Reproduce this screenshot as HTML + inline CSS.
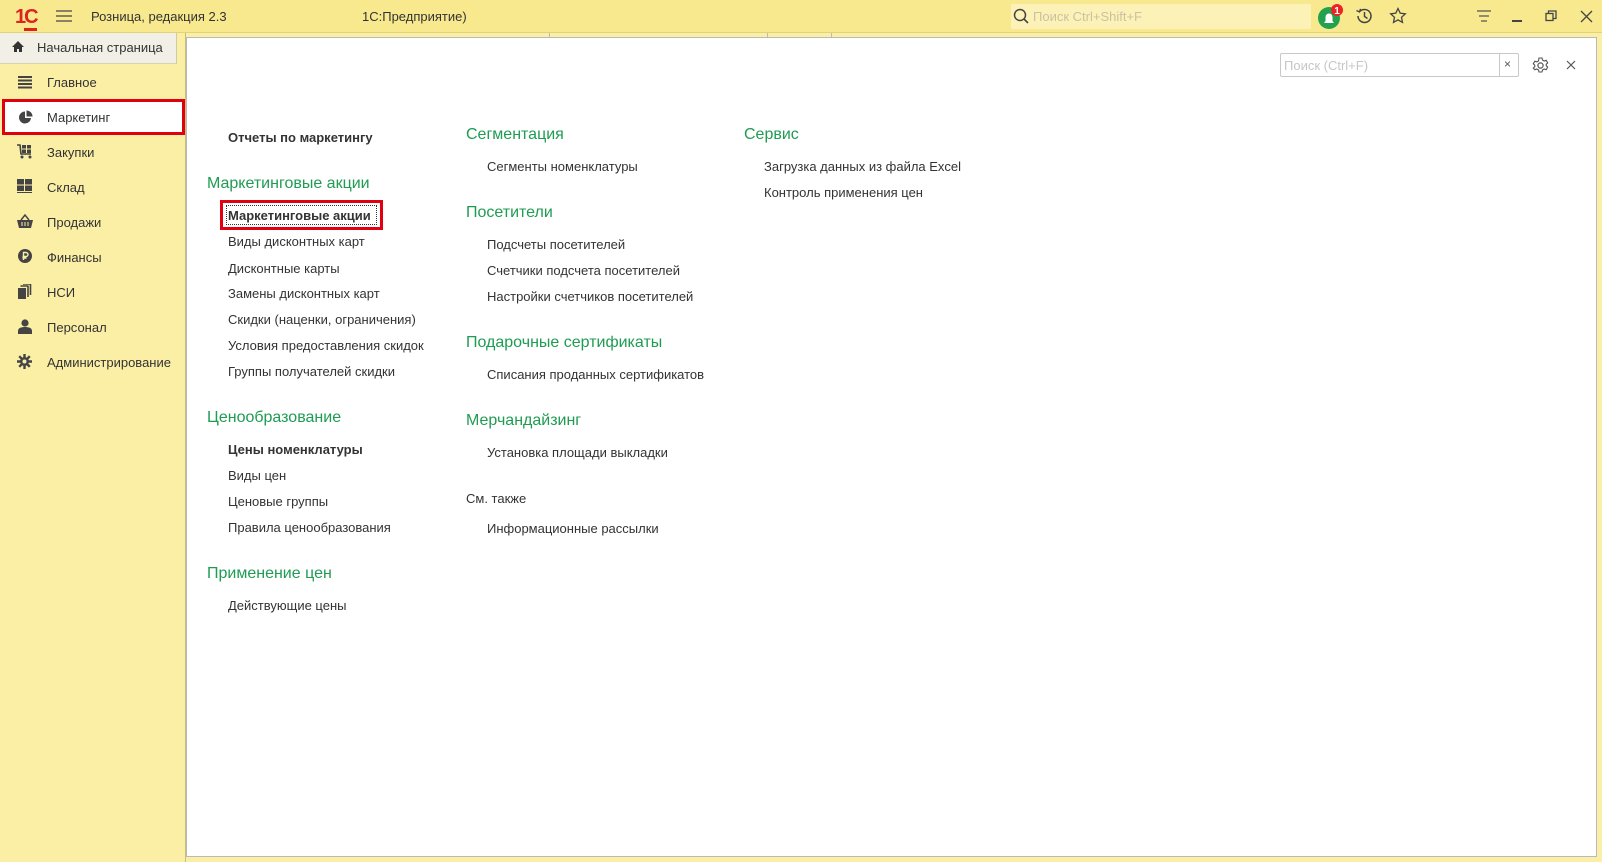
<!DOCTYPE html>
<html><head><meta charset="utf-8"><style>
*{margin:0;padding:0;box-sizing:border-box}
body{width:1602px;height:862px;background:#fbeea6;font-family:"Liberation Sans",Arial,sans-serif;font-size:13px;color:#333;position:relative;overflow:hidden}
.a{position:absolute;white-space:nowrap}
.tb{position:absolute;left:0;top:0;width:1602px;height:33px;background:#f8e98f;border-bottom:1px solid #e3d27a}
.side{position:absolute;left:0;top:33px;width:186px;height:829px;background:#fbefa6;border-right:1px solid #c9bd7a}
.home{position:absolute;left:0;top:33px;width:177px;height:31px;background:#f2f0e6;border-right:1px solid #cfc9a8;border-bottom:1px solid #d8d2b0}
.panel{position:absolute;left:186px;top:37px;width:1411px;height:820px;background:#fff;border:1px solid #b9b9b9}
.nav{font-size:13px;color:#333}
.h{font-size:16px;color:#1e9c52}
.l{font-size:13px;color:#333}
.b{font-weight:bold}
</style></head><body>
<div class="tb"></div>
<div class="a" style="left:15px;top:6px;font:bold 20px 'Liberation Sans';color:#d22;letter-spacing:-2px">1<span style="border-bottom:3px solid #d22">С</span></div>
<svg class="a" style="left:56px;top:9px" width="16" height="14"><path d="M0 2H16M0 7H16M0 12H16" stroke="#444" stroke-width="1.3"/></svg>
<div class="a" style="left:91px;top:9px;font-size:13px;color:#333">Розница, редакция 2.3</div>
<div class="a" style="left:362px;top:9px;font-size:13px;color:#333">1С:Предприятие)</div>
<div class="a" style="left:1011px;top:4px;width:300px;height:25px;background:#fcf2b8"></div>
<svg class="a" style="left:1013px;top:8px" width="16" height="16"><circle cx="7" cy="7" r="5.5" fill="none" stroke="#444" stroke-width="1.5"/><path d="M11 11L15 15" stroke="#444" stroke-width="1.6"/></svg>
<div class="a" style="left:1033px;top:9px;color:#c8c2a0;font-size:13px">Поиск Ctrl+Shift+F</div>
<svg class="a" style="left:1317px;top:4px" width="28" height="26"><circle cx="12" cy="14" r="11" fill="#22a24e"/><path d="M7 19h10l-1.5-2v-4a3.5 3.5 0 0 0-7 0v4z" fill="#fff"/><circle cx="20" cy="6" r="6" fill="#e22"/><text x="20" y="10" font-size="10" font-weight="bold" fill="#fff" text-anchor="middle" font-family="Liberation Sans">1</text></svg>
<svg class="a" style="left:1355px;top:7px" width="18" height="18"><path d="M3 9a6.5 6.5 0 1 0 2-4.7" fill="none" stroke="#444" stroke-width="1.5"/><path d="M1.5 3.5L4.5 5 5.5 1.8" fill="none" stroke="#444" stroke-width="1.3"/><path d="M9.5 5v4.5l3 2" fill="none" stroke="#444" stroke-width="1.5"/></svg>
<svg class="a" style="left:1389px;top:7px" width="18" height="18"><path d="M9 1.5l2.2 4.7 5.1.6-3.8 3.5 1 5.1L9 12.9l-4.5 2.5 1-5.1L1.7 6.8l5.1-.6z" fill="none" stroke="#444" stroke-width="1.3"/></svg>
<svg class="a" style="left:1476px;top:9px" width="16" height="16"><path d="M1 2h14M3 7h10M5 12h6" stroke="#555" stroke-width="1.3"/></svg>
<div class="a" style="left:1512px;top:20px;width:10px;height:1.5px;background:#444"></div>
<svg class="a" style="left:1545px;top:10px" width="12" height="12"><rect x="1" y="3.5" width="7" height="7" fill="none" stroke="#444" stroke-width="1.3"/><path d="M3.5 3.5V1H11v7.5H8" fill="none" stroke="#444" stroke-width="1.3"/></svg>
<svg class="a" style="left:1580px;top:10px" width="13" height="13"><path d="M1 1L12 12M12 1L1 12" stroke="#444" stroke-width="1.3"/></svg>
<div class="side"></div>
<div class="home"></div>
<svg class="a" style="left:11px;top:40px" width="14" height="13"><path d="M7 1L1 7h2v5h3V9h2v3h3V7h2z" fill="#333"/></svg>
<div class="a nav" style="left:37px;top:40px">Начальная страница</div>
<div class="panel"></div>
<div class="a" style="left:549px;top:33px;width:1px;height:4px;background:#bbb"></div>
<div class="a" style="left:767px;top:33px;width:1px;height:4px;background:#bbb"></div>
<div class="a" style="left:831px;top:33px;width:1px;height:4px;background:#bbb"></div>
<!-- nav -->
<svg class="a" style="left:18px;top:75px" width="14" height="14"><path d="M0 2h14M0 5.5h14M0 9h14M0 12.5h14" stroke="#444" stroke-width="2"/></svg>
<div class="a nav" style="left:47px;top:75px">Главное</div>
<div class="a" style="left:2px;top:99px;width:183px;height:36px;border:3px solid #e0000f;background:#fff"></div>
<svg class="a" style="left:18px;top:110px" width="15" height="15"><path d="M7 1.5a6 6 0 1 0 6 6.5H7z" fill="#444"/><path d="M8.5 0.5v6h6a6 6 0 0 0-6-6z" fill="#444"/></svg>
<div class="a nav" style="left:47px;top:110px">Маркетинг</div>
<svg class="a" style="left:17px;top:144px" width="16" height="15"><path d="M0 1h3l1 9h10" fill="none" stroke="#444" stroke-width="1.6"/><rect x="5" y="1" width="4" height="3.5" fill="#444"/><rect x="10" y="1" width="4" height="3.5" fill="#444"/><rect x="5" y="5.5" width="4" height="3.5" fill="#444"/><rect x="10" y="5.5" width="4" height="3.5" fill="#444"/><circle cx="5" cy="13" r="1.5" fill="#444"/><circle cx="13" cy="13" r="1.5" fill="#444"/></svg>
<div class="a nav" style="left:47px;top:145px">Закупки</div>
<svg class="a" style="left:17px;top:179px" width="15" height="14"><rect x="0" y="0" width="7" height="5.5" fill="#444"/><rect x="8" y="0" width="7" height="5.5" fill="#444"/><rect x="0" y="6.5" width="7" height="5.5" fill="#444"/><rect x="8" y="6.5" width="7" height="5.5" fill="#444"/><rect x="0" y="13" width="15" height="1" fill="#444"/></svg>
<div class="a nav" style="left:47px;top:180px">Склад</div>
<svg class="a" style="left:17px;top:214px" width="16" height="14"><path d="M4 6L8 1l4 5" fill="none" stroke="#444" stroke-width="1.5"/><path d="M0 6h16l-2 8H2z" fill="#444"/><path d="M5 8v4M8 8v4M11 8v4" stroke="#fbefa6" stroke-width="1"/></svg>
<div class="a nav" style="left:47px;top:215px">Продажи</div>
<svg class="a" style="left:18px;top:249px" width="14" height="14"><circle cx="7" cy="7" r="7" fill="#444"/><path d="M5.5 11V3.5h2.5a2 2 0 0 1 0 4H4.5M4.5 9h4" fill="none" stroke="#fbefa6" stroke-width="1.4"/></svg>
<div class="a nav" style="left:47px;top:250px">Финансы</div>
<svg class="a" style="left:18px;top:284px" width="14" height="15"><rect x="0" y="4" width="8" height="11" fill="#444"/><path d="M10 2v11M12.5 0v11" stroke="#444" stroke-width="1.6"/><path d="M2.5 2h8M5 0h8" stroke="#444" stroke-width="1.4"/></svg>
<div class="a nav" style="left:47px;top:285px">НСИ</div>
<svg class="a" style="left:18px;top:319px" width="14" height="15"><circle cx="7" cy="4" r="3.6" fill="#444"/><path d="M0 15v-3c0-3 3-4 7-4s7 1 7 4v3z" fill="#444"/></svg>
<div class="a nav" style="left:47px;top:320px">Персонал</div>
<svg class="a" style="left:17px;top:354px" width="15" height="15"><g stroke="#444" stroke-width="2.4"><path d="M7.5 0v15M0 7.5h15M2.2 2.2l10.6 10.6M12.8 2.2L2.2 12.8"/></g><circle cx="7.5" cy="7.5" r="4.5" fill="#444"/><circle cx="7.5" cy="7.5" r="2" fill="#fbefa6"/></svg>
<div class="a nav" style="left:47px;top:355px">Администрирование</div>
<!-- content search -->
<div class="a" style="left:1280px;top:53px;width:239px;height:24px;border:1px solid #c8c8c8;border-radius:2px"></div>
<div class="a" style="left:1499px;top:53px;width:1px;height:24px;background:#c8c8c8"></div>
<div class="a" style="left:1284px;top:58px;color:#c6c6c6;font-size:13px">Поиск (Ctrl+F)</div>
<div class="a" style="left:1504px;top:57px;color:#555;font-size:12px">×</div>
<svg class="a" style="left:1532px;top:57px" width="17" height="17"><circle cx="8.5" cy="8.5" r="2.6" fill="none" stroke="#555" stroke-width="1.2"/><path d="M7 1h3l.5 2 1.7 1 2-.7 1.5 2.6-1.5 1.4v1.4l1.5 1.4-1.5 2.6-2-.7-1.7 1-.5 2H7l-.5-2-1.7-1-2 .7L1.3 11l1.5-1.4V8.2L1.3 6.8 2.8 4.2l2 .7 1.7-1z" fill="none" stroke="#555" stroke-width="1.1"/></svg>
<svg class="a" style="left:1566px;top:60px" width="10" height="10"><path d="M1 1L9 9M9 1L1 9" stroke="#555" stroke-width="1.2"/></svg>
<!-- col1 -->
<div class="a l b" style="left:228px;top:130px">Отчеты по маркетингу</div>
<div class="a h" style="left:207px;top:175px">Маркетинговые акции</div>
<div class="a" style="left:220px;top:200px;width:163px;height:30px;border:3px solid #e0000f"></div>
<div class="a" style="left:226px;top:205px;width:151px;height:20px;border:1px dotted #333"></div>
<div class="a l b" style="left:228px;top:208px">Маркетинговые акции</div>
<div class="a l" style="left:228px;top:234px">Виды дисконтных карт</div>
<div class="a l" style="left:228px;top:261px">Дисконтные карты</div>
<div class="a l" style="left:228px;top:286px">Замены дисконтных карт</div>
<div class="a l" style="left:228px;top:312px">Скидки (наценки, ограничения)</div>
<div class="a l" style="left:228px;top:338px">Условия предоставления скидок</div>
<div class="a l" style="left:228px;top:364px">Группы получателей скидки</div>
<div class="a h" style="left:207px;top:409px">Ценообразование</div>
<div class="a l b" style="left:228px;top:442px">Цены номенклатуры</div>
<div class="a l" style="left:228px;top:468px">Виды цен</div>
<div class="a l" style="left:228px;top:494px">Ценовые группы</div>
<div class="a l" style="left:228px;top:520px">Правила ценообразования</div>
<div class="a h" style="left:207px;top:565px">Применение цен</div>
<div class="a l" style="left:228px;top:598px">Действующие цены</div>
<!-- col2 -->
<div class="a h" style="left:466px;top:126px">Сегментация</div>
<div class="a l" style="left:487px;top:159px">Сегменты номенклатуры</div>
<div class="a h" style="left:466px;top:204px">Посетители</div>
<div class="a l" style="left:487px;top:237px">Подсчеты посетителей</div>
<div class="a l" style="left:487px;top:263px">Счетчики подсчета посетителей</div>
<div class="a l" style="left:487px;top:289px">Настройки счетчиков посетителей</div>
<div class="a h" style="left:466px;top:334px">Подарочные сертификаты</div>
<div class="a l" style="left:487px;top:367px">Списания проданных сертификатов</div>
<div class="a h" style="left:466px;top:412px">Мерчандайзинг</div>
<div class="a l" style="left:487px;top:445px">Установка площади выкладки</div>
<div class="a l" style="left:466px;top:491px">См. также</div>
<div class="a l" style="left:487px;top:521px">Информационные рассылки</div>
<!-- col3 -->
<div class="a h" style="left:744px;top:126px">Сервис</div>
<div class="a l" style="left:764px;top:159px">Загрузка данных из файла Excel</div>
<div class="a l" style="left:764px;top:185px">Контроль применения цен</div>
</body></html>
